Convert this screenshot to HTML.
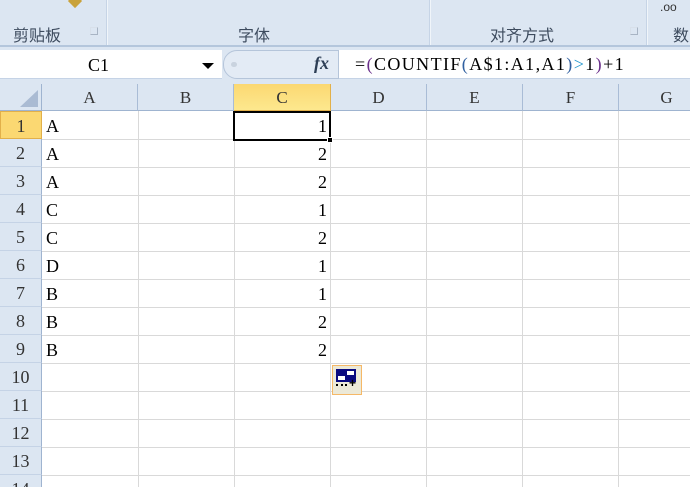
<!DOCTYPE html><html><head><meta charset="utf-8"><style>
html,body{margin:0;width:690px;height:487px;overflow:hidden}
body{background:#fff;position:relative;font-family:"Liberation Serif","Noto Serif CJK SC",serif}
div{position:absolute;box-sizing:border-box}
.rib{left:0;top:0;width:690px;height:47px;background:#dce6f2;border-bottom:2px solid #b4c6dc}
.sep{top:0;width:2px;height:45px;background:#c6d4e6;border-right:1px solid #f0f5fa}
.lab{top:22px;font-family:"Liberation Sans","Noto Sans CJK SC",sans-serif;font-size:16px;color:#3d4b5e}
.dl{top:27px;width:8px;height:8px;border:1px solid #a8b4c4;border-top-color:#d8e0ea;border-left-color:#d8e0ea}
.fb{left:0;top:47px;width:690px;height:37px;background:#dce6f2}
.ch{top:84px;height:27px;background:#dce6f2;border-right:1px solid #a9bcd6;border-bottom:1px solid #9fb4d0;text-align:center;font-size:17px;line-height:27px;color:#333}
.rh{left:0;width:42px;height:28px;background:#dce6f2;border-right:1px solid #9fb4d0;border-bottom:1px solid #c5d3e6;text-align:center;font-size:18px;line-height:28px;color:#333}
.vl{top:111px;width:1px;height:376px;background:#d9d9d9}
.hl{left:42px;width:648px;height:1px;background:#d9d9d9}
.v{font-size:18px;line-height:28px;height:28px}
</style></head><body>
<div class="rib">
<div class="sep" style="left:106px"></div><div class="sep" style="left:429px"></div><div class="sep" style="left:646px"></div>
<div class="lab" style="left:13px">剪贴板</div><div class="dl" style="left:90px"></div>
<div class="lab" style="left:238px">字体</div>
<div class="lab" style="left:490px">对齐方式</div><div class="dl" style="left:630px"></div>
<div class="lab" style="left:673px">数</div>
<div style="left:660px;top:0;font-family:'Liberation Sans';font-size:12px;color:#333">.oo</div>
<div style="left:70px;top:-4px;width:10px;height:10px;background:#c9a23a;transform:rotate(45deg)"></div>
</div>
<div class="fb">
<div style="left:0;top:3px;width:222px;height:29px;background:#fff;border-bottom:1px solid #c5d3e6"></div>
<div style="left:88px;top:8px;font-size:18px">C1</div>
<div style="left:202px;top:16px;width:0;height:0;border-left:6px solid transparent;border-right:6px solid transparent;border-top:6px solid #000"></div>
<div style="left:223px;top:3px;width:116px;height:29px;background:#e3ebf5;border:1px solid #b5c5da;border-radius:14px 0 0 14px"></div>
<div style="left:231px;top:15px;width:6px;height:5px;border-radius:3px;background:#c9d3df"></div>
<div style="left:314px;top:6px;font-style:italic;font-weight:bold;font-size:18px;color:#2d3e55">fx</div>
<div style="left:339px;top:3px;width:351px;height:29px;background:#fff;border-bottom:1px solid #c5d3e6"></div>
<div style="left:355px;top:7px;font-size:18px;letter-spacing:1.4px;white-space:nowrap">=<span style="color:#6a2f8a">(</span>COUNTIF<span style="color:#3060a0">(</span>A$1:A1,A1<span style="color:#3060a0">)</span><span style="color:#2a9ad0">&gt;</span>1<span style="color:#6a2f8a">)</span>+1</div>
</div>
<div style="left:0;top:84px;width:42px;height:27px;background:#dce6f2;border-right:1px solid #9fb4d0;border-bottom:1px solid #9fb4d0"></div>
<div style="left:20px;top:90px;width:0;height:0;border-left:18px solid transparent;border-bottom:17px solid #aabbd3"></div>
<div class="ch" style="left:42px;width:96px">A</div>
<div class="ch" style="left:138px;width:96px">B</div>
<div class="ch" style="left:234px;width:97px;background:linear-gradient(#fbd872,#fde88e);border-color:#e2b04a">C</div>
<div class="ch" style="left:331px;width:96px">D</div>
<div class="ch" style="left:427px;width:96px">E</div>
<div class="ch" style="left:523px;width:96px">F</div>
<div class="ch" style="left:619px;width:96px">G</div>
<div class="vl" style="left:138px"></div><div class="vl" style="left:234px"></div><div class="vl" style="left:330px"></div><div class="vl" style="left:426px"></div><div class="vl" style="left:522px"></div><div class="vl" style="left:618px"></div>
<div class="hl" style="top:139px"></div><div class="hl" style="top:167px"></div><div class="hl" style="top:195px"></div><div class="hl" style="top:223px"></div><div class="hl" style="top:251px"></div><div class="hl" style="top:279px"></div><div class="hl" style="top:307px"></div><div class="hl" style="top:335px"></div><div class="hl" style="top:363px"></div><div class="hl" style="top:391px"></div><div class="hl" style="top:419px"></div><div class="hl" style="top:447px"></div><div class="hl" style="top:475px"></div>
<div class="rh" style="top:111px;background:#fbd872;border:1px solid #e2b04a">1</div>
<div class="rh" style="top:139px">2</div><div class="rh" style="top:167px">3</div><div class="rh" style="top:195px">4</div><div class="rh" style="top:223px">5</div><div class="rh" style="top:251px">6</div><div class="rh" style="top:279px">7</div><div class="rh" style="top:307px">8</div><div class="rh" style="top:335px">9</div><div class="rh" style="top:363px">10</div><div class="rh" style="top:391px">11</div><div class="rh" style="top:419px">12</div><div class="rh" style="top:447px">13</div><div class="rh" style="top:475px">14</div>
<div class="v" style="left:46px;top:112px">A</div><div class="v" style="left:46px;top:140px">A</div><div class="v" style="left:46px;top:168px">A</div><div class="v" style="left:46px;top:196px">C</div><div class="v" style="left:46px;top:224px">C</div><div class="v" style="left:46px;top:252px">D</div><div class="v" style="left:46px;top:280px">B</div><div class="v" style="left:46px;top:308px">B</div><div class="v" style="left:46px;top:336px">B</div>
<div class="v" style="left:300px;width:27px;text-align:right;top:112px">1</div><div class="v" style="left:300px;width:27px;text-align:right;top:140px">2</div><div class="v" style="left:300px;width:27px;text-align:right;top:168px">2</div><div class="v" style="left:300px;width:27px;text-align:right;top:196px">1</div><div class="v" style="left:300px;width:27px;text-align:right;top:224px">2</div><div class="v" style="left:300px;width:27px;text-align:right;top:252px">1</div><div class="v" style="left:300px;width:27px;text-align:right;top:280px">1</div><div class="v" style="left:300px;width:27px;text-align:right;top:308px">2</div><div class="v" style="left:300px;width:27px;text-align:right;top:336px">2</div>
<div style="left:233px;top:111px;width:98px;height:30px;border:2px solid #000"></div>
<div style="left:327px;top:137px;width:6px;height:6px;background:#000;border:1px solid #fff"></div>
<div style="left:332px;top:365px;width:30px;height:30px;background:#ece9d8;border:1px solid #f5b867"></div>
<div style="left:336px;top:369px;width:20px;height:13px;background:#0a0a80"></div>
<div style="left:347px;top:371px;width:7px;height:4px;background:#fff"></div>
<div style="left:338px;top:376px;width:7px;height:4px;background:#fff"></div>
<div style="left:336px;top:384px;width:11px;height:2px;border-top:2px dotted #000"></div>
<div style="left:349px;top:377px;font-family:'Liberation Sans';font-weight:bold;font-size:12px;line-height:12px">+</div>
</body></html>
